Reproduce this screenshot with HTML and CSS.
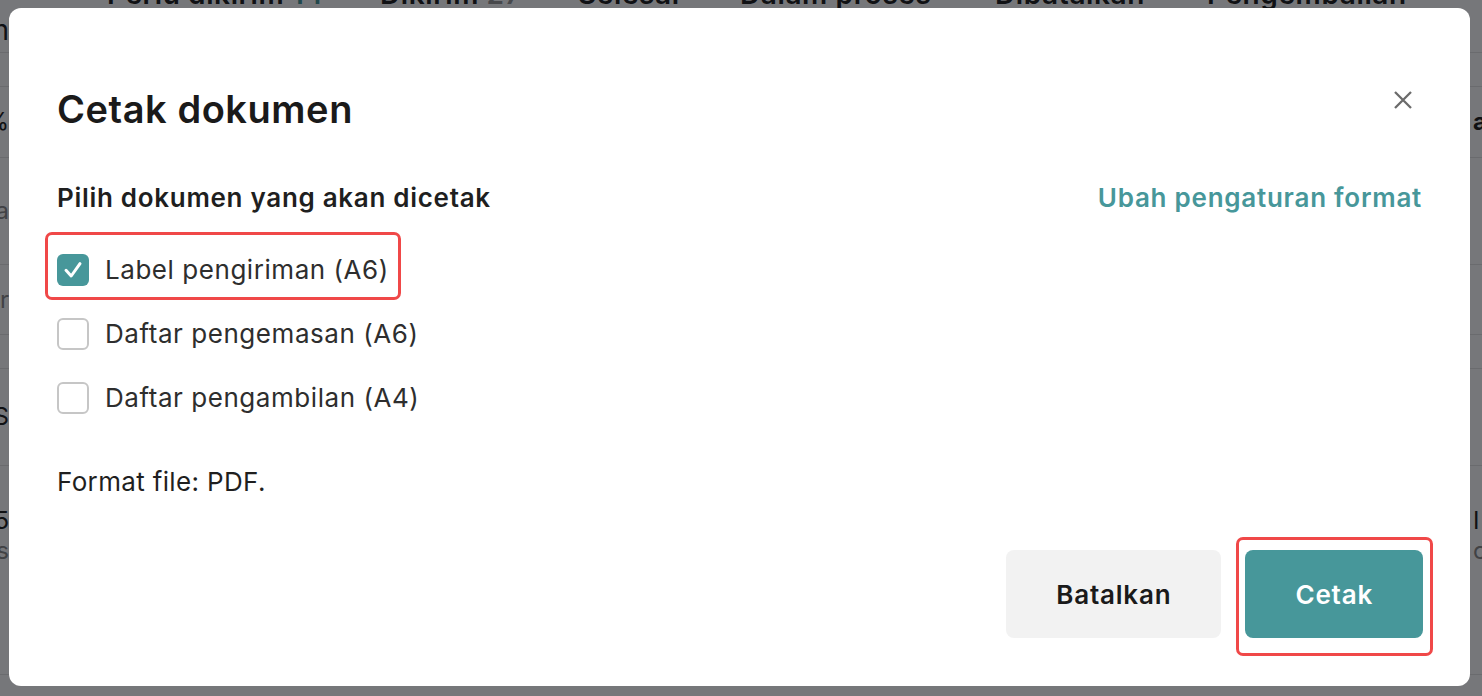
FILE: index.html
```html
<!DOCTYPE html>
<html lang="id">
<head>
<meta charset="utf-8">
<title>Cetak dokumen</title>
<link rel="stylesheet" href="styles.css">
</head>
<body>
<div class="page">
  <nav class="tabs">
    <span class="tab">Perlu dikirim <b class="count active">14</b></span>
    <span class="tab">Dikirim <b class="count">27</b></span>
    <span class="tab">Selesai</span>
    <span class="tab">Dalam proses</span>
    <span class="tab">Dibatalkan</span>
    <span class="tab">Pengembalian</span>
  </nav>
  <div class="row r1"><span class="edge-l dark big">Item</span><span class="edge-r"></span></div>
  <div class="row r2"><span class="edge-l"></span><span class="edge-r"></span></div>
  <div class="row r3"><span class="edge-l dark">%</span><span class="edge-r dark bold">a</span></div>
  <div class="row r4"><span class="edge-l grey">Nama</span><span class="edge-r"></span></div>
  <div class="row r5"><span class="edge-l grey">Kurir</span><span class="edge-r"></span></div>
  <div class="row r6"><span class="edge-l"></span><span class="edge-r"></span></div>
  <div class="row r7"><span class="edge-l dark">SKUS</span><span class="edge-r"></span></div>
  <div class="row r8">
    <span class="edge-l stack"><span class="dark">125</span><span class="grey">pcs</span></span>
    <span class="edge-r stack"><span class="dark">I</span><span class="grey">c</span></span>
  </div>
</div>

<div class="overlay">
  <section class="modal" role="dialog" aria-labelledby="dlg-title">
    <header class="modal-head">
      <h2 class="title" id="dlg-title">Cetak dokumen</h2>
      <button class="close" type="button" aria-label="Tutup">
        <svg width="20" height="20" viewBox="0 0 20 20" aria-hidden="true">
          <path d="M2 2 L18 18 M18 2 L2 18" stroke="#6b6b6b" stroke-width="2.3" fill="none"/>
        </svg>
      </button>
    </header>

    <div class="sub-row">
      <p class="subtitle">Pilih dokumen yang akan dicetak</p>
      <a class="link" href="#">Ubah pengaturan format</a>
    </div>

    <div class="options">
      <label class="opt hl-row">
        <span class="box checked">
          <svg width="32" height="32" viewBox="0 0 32 32" aria-hidden="true">
            <path d="M9 16.3 L14.2 22 L23 9.6" stroke="#fff" stroke-width="3" fill="none" stroke-linecap="round" stroke-linejoin="round"/>
          </svg>
        </span>
        <span class="opt-label">Label pengiriman (A6)</span>
      </label>
      <label class="opt">
        <span class="box"></span>
        <span class="opt-label">Daftar pengemasan (A6)</span>
      </label>
      <label class="opt">
        <span class="box"></span>
        <span class="opt-label">Daftar pengambilan (A4)</span>
      </label>
    </div>

    <p class="format">Format file: PDF.</p>

    <div class="actions">
      <button class="btn btn-secondary" type="button">Batalkan</button>
      <button class="btn btn-primary hl-btn" type="button">Cetak</button>
    </div>
  </section>
</div>
</body>
</html>
```

FILE: styles.css
```css
* { box-sizing: border-box; }

html, body {
  margin: 0;
  padding: 0;
  height: 100%;
}

body {
  background: #ffffff;
  font-family: Inter, "Noto Sans", "Liberation Sans", sans-serif;
  color: #1a1a1a;
  overflow: hidden;
}

/* ---------- underlying page (dimmed) ---------- */
.page {
  display: flex;
  flex-direction: column;
}

.tabs {
  display: grid;
  grid-template-columns: 273px 198px 162px 255px 212px 1fr;
  padding-left: 107px;
  margin-top: -21px;
  height: 29px;
  font-size: 28px;
  line-height: 30px;
  font-weight: 600;
  color: #222;
  white-space: nowrap;
  letter-spacing: 0.6px;
}

.count { font-weight: 600; color: #9a9a9a; }
.count.active { color: #47979a; }

.row {
  display: flex;
  justify-content: space-between;
  border-bottom: 1px solid #e4e4e4;
  font-size: 24px;
  line-height: 30px;
}

.r1 { height: 45px; align-items: center; }
.r2 { height: 34px; }
.r3 { height: 71px; align-items: center; }
.r4 { height: 107px; align-items: center; }
.r5 { height: 70px; align-items: center; }
.r6 { height: 34px; }
.r7 { height: 97px; align-items: center; }
.r8 { height: 209px; padding-top: 40px; }

.edge-l {
  width: 9px;
  overflow: hidden;
  white-space: nowrap;
  display: flex;
  justify-content: flex-end;
}

.edge-r {
  width: 9px;
  overflow: hidden;
  white-space: nowrap;
  display: flex;
  justify-content: flex-start;
}

.edge-l.stack {
  flex-direction: column;
  justify-content: flex-start;
  align-items: flex-end;
}

.edge-r.stack {
  flex-direction: column;
  justify-content: flex-start;
  align-items: flex-start;
}

.dark { color: #222; }
.grey { color: #8c8c8c; }
.bold { font-weight: 700; }
.big { font-size: 28px; }

/* ---------- overlay + modal ---------- */
.overlay {
  position: fixed;
  inset: 0;
  background: rgba(2, 3, 10, 0.54);
  display: flex;
  align-items: flex-start;
  padding: 8px 12px 10px 9px;
}

.modal {
  flex: 1;
  background: #ffffff;
  border-radius: 12px;
  padding: 79px 48px 48px 48px;
  display: flex;
  flex-direction: column;
}

.modal-head {
  display: flex;
  justify-content: space-between;
  align-items: flex-start;
}

.title {
  margin: 0;
  font-size: 38px;
  line-height: 44px;
  font-weight: 600;
  color: #1a1a1a;
  letter-spacing: 0.55px;
}

.close {
  width: 26px;
  height: 26px;
  margin-right: 6px;
  padding: 0;
  border: 0;
  background: transparent;
  display: flex;
  align-items: center;
  justify-content: center;
  cursor: pointer;
}

.sub-row {
  margin-top: 51px;
  display: flex;
  justify-content: space-between;
  align-items: center;
}

.subtitle {
  margin: 0;
  font-size: 26px;
  line-height: 32px;
  font-weight: 600;
  color: #1f1f1f;
  letter-spacing: 0.7px;
}

.link {
  font-size: 26px;
  line-height: 32px;
  font-weight: 600;
  color: #47979a;
  text-decoration: none;
  letter-spacing: 0.75px;
}

.options {
  margin-top: 40px;
  display: flex;
  flex-direction: column;
  align-items: flex-start;
  gap: 32px;
}

.opt {
  display: inline-flex;
  align-items: center;
  gap: 16px;
  height: 32px;
  cursor: pointer;
}

.hl-row { position: relative; }
.hl-row::after {
  content: "";
  position: absolute;
  top: -22px;
  bottom: -14px;
  left: -12px;
  right: -12px;
  border: 3px solid #f04848;
  border-radius: 7px;
  pointer-events: none;
}

.box {
  width: 32px;
  height: 32px;
  border: 2px solid #c6c6c6;
  border-radius: 6px;
  background: #fff;
  flex: none;
}

.box.checked {
  border: 0;
  background: #47979a;
}

.box svg { display: block; }

.opt-label {
  font-size: 26px;
  line-height: 32px;
  color: #2e2e2e;
  letter-spacing: 0.55px;
}

.format {
  margin: 52px 0 0 0;
  font-size: 26px;
  line-height: 32px;
  color: #1f1f1f;
  letter-spacing: 0.35px;
}

.actions {
  margin-top: 52px;
  display: flex;
  justify-content: flex-end;
  gap: 24px;
  margin-right: -1px;
}

.btn {
  height: 88px;
  padding: 0 50px;
  border: 0;
  border-radius: 8px;
  font-family: inherit;
  font-size: 26px;
  font-weight: 600;
  letter-spacing: 0.8px;
  cursor: pointer;
}

.btn-secondary {
  background: #f2f2f2;
  color: #1a1a1a;
  padding: 0 50px;
}

.btn-primary {
  background: #47979a;
  color: #ffffff;
}

.hl-btn { position: relative; }
.hl-btn::after {
  content: "";
  position: absolute;
  top: -13px;
  bottom: -18px;
  left: -9px;
  right: -10px;
  border: 3px solid #f04848;
  border-radius: 7px;
  pointer-events: none;
}
```
